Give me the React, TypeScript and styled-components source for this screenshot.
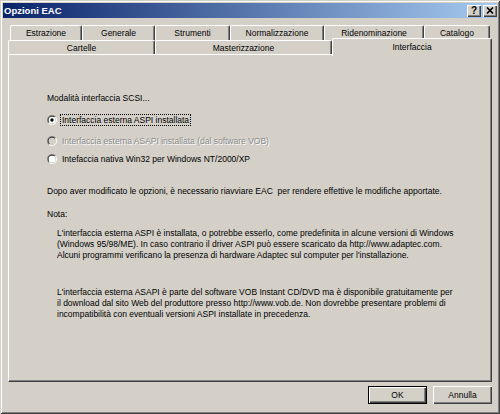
import * as React from "react";
import styled, { createGlobalStyle } from "styled-components";

const GlobalStyle = createGlobalStyle`
  html, body {
    margin: 0;
    padding: 0;
    background: #d4d0c8;
  }
  body {
    font-family: "Liberation Sans", Arial, sans-serif;
    font-size: 8.5px;
    color: #000;
  }
`

const Window = styled.div`
  width: 500px;
  height: 414px;
  box-sizing: border-box;
  padding: 3px;
  background: #d4d0c8;
  box-shadow: inset 1px 1px #d4d0c8, inset -1px -1px #404040, inset 2px 2px #fff, inset -2px -2px #808080;
  display: flex;
  flex-direction: column;
`

const TitleBar = styled.div`
  height: 15px;
  display: flex;
  align-items: center;
  justify-content: space-between;
  padding: 0 0 0 1px;
  background: linear-gradient(to right, #0a246a, #a6caf0);
`

const Title = styled.span`
  color: #fff;
  font-weight: bold;
  font-size: 9.5px;
`

const CaptionButtons = styled.div`
  display: flex;
  gap: 2px;
`

const CaptionButton = styled.div`
  width: 14px;
  height: 12px;
  box-sizing: border-box;
  background: #d4d0c8;
  box-shadow: inset 1px 1px #fff, inset -1px -1px #404040, inset -2px -2px #808080;
  display: flex;
  align-items: center;
  justify-content: center;
  font-weight: bold;
  font-size: 10px;
  line-height: 1;
`

const TabStrip = styled.div`
  margin: 7px 5px 0;
  display: flex;
  flex-direction: column;
`

const TabRow = styled.div<{ $inset: number }>`
  display: flex;
  height: 15px;
  padding: 0 ${p => p.$inset}px;
`

const Tab = styled.div<{ $width: number; $active?: boolean }>`
  width: ${p => p.$width}px;
  height: ${p => (p.$active ? 18 : 15)}px;
  margin-top: ${p => (p.$active ? -2 : 0)}px;
  box-sizing: border-box;
  display: flex;
  align-items: center;
  justify-content: center;
  padding-bottom: ${p => (p.$active ? 2 : 0)}px;
  background: #d4d0c8;
  border-top: 1px solid #fff;
  border-left: 1px solid #fff;
  border-right: 1px solid #404040;
  border-radius: 2px 2px 0 0;
  box-shadow: inset -1px 0 #808080;
  position: relative;
  z-index: ${p => (p.$active ? 2 : 0)};
  white-space: nowrap;
`

const Panel = styled.div`
  margin-top: -1px;
  height: 328px;
  box-sizing: border-box;
  border-top: 1px solid #fff;
  border-left: 1px solid #fff;
  border-right: 1px solid #404040;
  border-bottom: 1px solid #404040;
  box-shadow: inset -1px -1px #808080;
  padding: 37px 0 0 38px;
  position: relative;
  z-index: 1;
  display: flex;
  flex-direction: column;
`

const Line = styled.div<{ $top?: number }>`
  line-height: 12px;
  margin-top: ${p => p.$top ?? 0}px;
  white-space: nowrap;
`

const RadioRow = styled.div<{ $top: number }>`
  display: flex;
  align-items: center;
  gap: 3px;
  height: 12px;
  margin-top: ${p => p.$top}px;
`

const RadioLabel = styled.span<{ $focused?: boolean; $disabled?: boolean }>`
  padding: 0 1px;
  line-height: 10px;
  border: 1px dotted ${p => (p.$focused ? "#000" : "transparent")};
  color: ${p => (p.$disabled ? "#8a8a8a" : "#000")};
  text-shadow: ${p => (p.$disabled ? "1px 1px 0 #fff" : "none")};
  white-space: nowrap;
`

const Paragraph = styled.div<{ $top: number }>`
  margin: ${p => p.$top}px 0 0 10px;
  line-height: 11px;
  white-space: nowrap;
`

const Footer = styled.div`
  display: flex;
  justify-content: flex-end;
  gap: 6px;
  padding: 4px 5px 0;
`

const Button = styled.button<{ $default?: boolean }>`
  width: 59px;
  height: 18px;
  padding: 0;
  border: none;
  background: #d4d0c8;
  font: inherit;
  color: #000;
  box-shadow: ${p =>
    p.$default
      ? "inset 0 0 0 1px #000, inset 2px 2px #fff, inset -2px -2px #404040, inset -3px -3px #808080"
      : "inset 1px 1px #fff, inset -1px -1px #404040, inset -2px -2px #808080"};
`

const RadioMark = ({ checked, disabled }: { checked?: boolean; disabled?: boolean }) => (
  <svg width="10" height="10" viewBox="0 0 12 12">
    <defs>
      <linearGradient id="radio-outer" x1="0" y1="0" x2="1" y2="1">
        <stop offset="0.5" stopColor="#808080" />
        <stop offset="0.5" stopColor="#fff" />
      </linearGradient>
      <linearGradient id="radio-inner" x1="0" y1="0" x2="1" y2="1">
        <stop offset="0.5" stopColor="#404040" />
        <stop offset="0.5" stopColor="#d4d0c8" />
      </linearGradient>
    </defs>
    <circle cx="6" cy="6" r="6" fill="url(#radio-outer)" />
    <circle cx="6" cy="6" r="5" fill="url(#radio-inner)" />
    <circle cx="6" cy="6" r="4" fill={disabled ? "#d4d0c8" : "#fff"} />
    {checked && <circle cx="6" cy="6" r="2" fill="#000" />}
  </svg>
)

const topTabs = [
  { label: "Estrazione", width: 72 },
  { label: "Generale", width: 73 },
  { label: "Strumenti", width: 75 },
  { label: "Normalizzazione", width: 94 },
  { label: "Ridenominazione", width: 100 },
  { label: "Catalogo", width: 66 },
]

const bottomTabs = [
  { label: "Cartelle", width: 147 },
  { label: "Masterizzazione", width: 177 },
  { label: "Interfaccia", width: 160, active: true },
]

const note1 = [
  "L'interfaccia esterna ASPI è installata, o potrebbe esserlo, come predefinita in alcune versioni di Windows",
  "(Windows 95/98/ME). In caso contrario il driver ASPI può essere scaricato da http://www.adaptec.com.",
  "Alcuni programmi verificano la presenza di hardware Adaptec sul computer per l'installazione.",
]

const note2 = [
  "L'interfaccia esterna ASAPI è parte del software VOB Instant CD/DVD ma è disponibile gratuitamente per",
  "il download dal sito Web del produttore presso http://www.vob.de. Non dovrebbe presentare problemi di",
  "incompatibilità con eventuali versioni ASPI installate in precedenza.",
]

export default function App() {
  return (
    <>
      <GlobalStyle />
      <Window>
        <TitleBar>
          <Title>Opzioni EAC</Title>
          <CaptionButtons>
            <CaptionButton>?</CaptionButton>
            <CaptionButton>
              <svg width="8" height="7" viewBox="0 0 8 7">
                <path d="M1 0.5 L7 6.5 M7 0.5 L1 6.5" stroke="#000" strokeWidth="1.6" />
              </svg>
            </CaptionButton>
          </CaptionButtons>
        </TitleBar>

        <TabStrip>
          <TabRow $inset={2}>
            {topTabs.map(t => (
              <Tab key={t.label} $width={t.width}>{t.label}</Tab>
            ))}
          </TabRow>
          <TabRow $inset={0}>
            {bottomTabs.map(t => (
              <Tab key={t.label} $width={t.width} $active={t.active}>{t.label}</Tab>
            ))}
          </TabRow>
          <Panel>
            <Line>Modalità interfaccia SCSI...</Line>
            <RadioRow $top={10}>
              <RadioMark checked />
              <RadioLabel $focused>Interfaccia esterna ASPI installata</RadioLabel>
            </RadioRow>
            <RadioRow $top={9}>
              <RadioMark disabled />
              <RadioLabel $disabled>Interfaccia esterna ASAPI installata (dal software VOB)</RadioLabel>
            </RadioRow>
            <RadioRow $top={6}>
              <RadioMark />
              <RadioLabel>Intefaccia nativa Win32 per Windows NT/2000/XP</RadioLabel>
            </RadioRow>
            <Line $top={20}>Dopo aver modificato le opzioni, è necessario riavviare EAC&nbsp; per rendere effettive le modifiche apportate.</Line>
            <Line $top={11}>Nota:</Line>
            <Paragraph $top={8}>
              {note1.map(l => <div key={l}>{l}</div>)}
            </Paragraph>
            <Paragraph $top={26}>
              {note2.map(l => <div key={l}>{l}</div>)}
            </Paragraph>
          </Panel>
        </TabStrip>

        <Footer>
          <Button $default>OK</Button>
          <Button>Annulla</Button>
        </Footer>
      </Window>
    </>
  )
}
